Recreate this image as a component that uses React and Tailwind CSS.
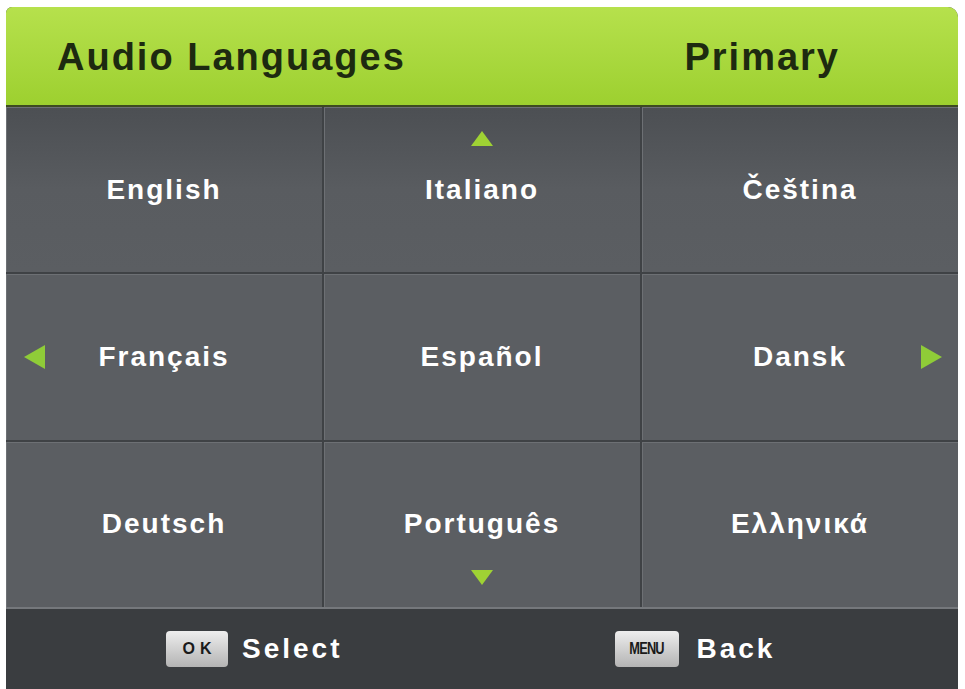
export default function App() {
  const cells = [
    { name: 'English' },
    { name: 'Italiano', arrow: 'up' },
    { name: 'Čeština' },
    { name: 'Français', arrow: 'left' },
    { name: 'Español' },
    { name: 'Dansk', arrow: 'right' },
    { name: 'Deutsch' },
    { name: 'Português', arrow: 'down' },
    { name: 'Ελληνικά' },
  ];

  const font = { fontFamily: '"Liberation Sans", Arial, sans-serif' };

  return (
    <div className="w-[965px] h-[689px] bg-white pl-[6px] pt-[7px] pr-[7px] overflow-hidden" style={font}>
      <div className="h-full flex flex-col bg-[#404346] rounded-tl-[6px] rounded-tr-[10px] overflow-hidden">
        <div className="h-[100px] shrink-0 flex items-center pt-[3px] bg-gradient-to-b from-[#b6e14c] to-[#9dd02f] border-b-2 border-[#3d4a22] text-[#1d2a10] font-bold text-[38px] tracking-[2px]">
          <span className="ml-[51px]">Audio Languages</span>
          <span className="ml-auto mr-[118px]">Primary</span>
        </div>

        <div className="flex-1 grid grid-cols-3 grid-rows-3 gap-[2px] bg-[#3f4245]">
          {cells.map((c, i) => (
            <div
              key={c.name}
              className={
                'relative flex items-center justify-center text-white font-bold text-[28px] tracking-[2px] shadow-[inset_1px_1px_0_#6d7074] ' +
                (i < 3 ? 'bg-gradient-to-b from-[#4c4f53] via-[#595c60] to-[#5b5e62]' : 'bg-[#5b5e62]')
              }
            >
              {c.arrow === 'up' && (
                <svg className="absolute top-[24px] left-1/2 -translate-x-1/2" width="22" height="15" viewBox="0 0 22 15">
                  <polygon points="11,0 22,15 0,15" fill="#9fd234" />
                </svg>
              )}
              {c.arrow === 'down' && (
                <svg className="absolute bottom-[22px] left-1/2 -translate-x-1/2" width="22" height="15" viewBox="0 0 22 15">
                  <polygon points="0,0 22,0 11,15" fill="#9fd234" />
                </svg>
              )}
              {c.arrow === 'left' && (
                <svg className="absolute left-[18px] top-1/2 -translate-y-1/2" width="21" height="24" viewBox="0 0 21 24">
                  <polygon points="21,0 21,24 0,12" fill="#8fcc38" />
                </svg>
              )}
              {c.arrow === 'right' && (
                <svg className="absolute right-[16px] top-1/2 -translate-y-1/2" width="21" height="24" viewBox="0 0 21 24">
                  <polygon points="0,0 21,12 0,24" fill="#8fcc38" />
                </svg>
              )}
              <span>{c.name}</span>
            </div>
          ))}
        </div>

        <div className="h-[82px] shrink-0 flex items-center bg-[#3a3d40] border-t-2 border-[#75787c] text-white font-bold text-[28px] tracking-[3px]">
          <div className="ml-[160px] w-[62px] h-[36px] rounded-[4px] bg-gradient-to-b from-[#eeeeee] to-[#b4b4b4] flex items-center justify-center text-[#1a1a1a] text-[16px] tracking-[5px] font-bold">
            <span className="pl-[5px]">OK</span>
          </div>
          <span className="ml-[14px]">Select</span>
          <div className="ml-[272px] w-[64px] h-[36px] rounded-[4px] bg-gradient-to-b from-[#eeeeee] to-[#b4b4b4] flex items-center justify-center text-[#1a1a1a] text-[16px] tracking-[-1px] font-bold">
            <span className="inline-block scale-x-[0.8]">MENU</span>
          </div>
          <span className="ml-[18px]">Back</span>
        </div>
      </div>
    </div>
  );
}
